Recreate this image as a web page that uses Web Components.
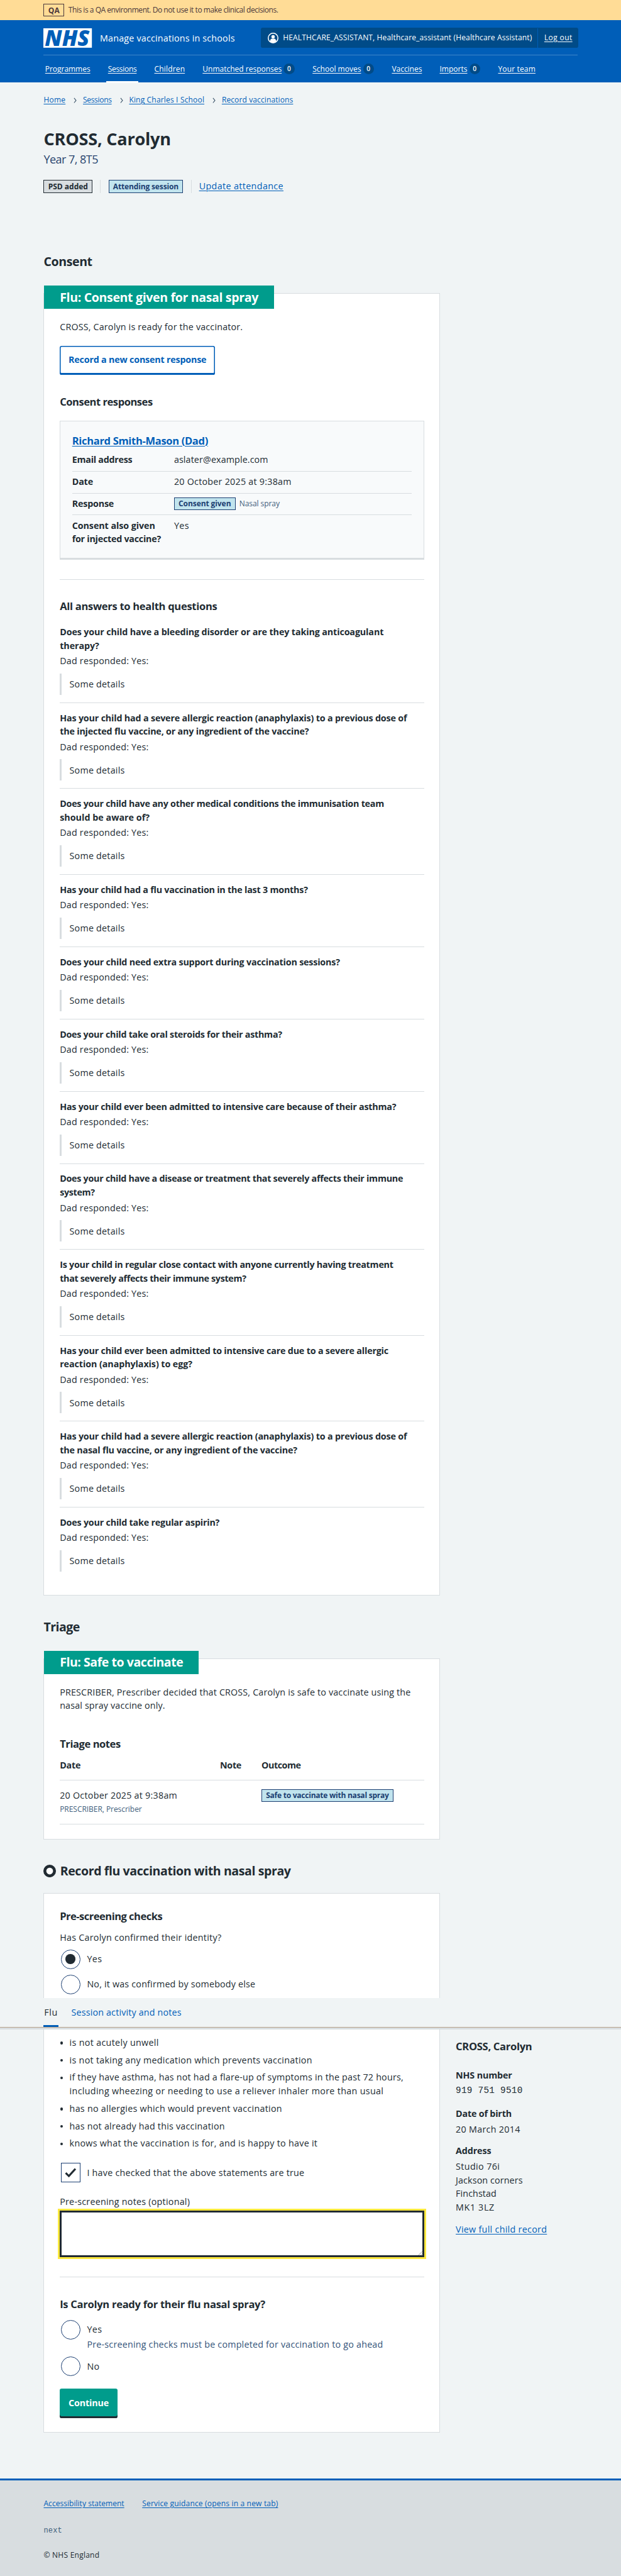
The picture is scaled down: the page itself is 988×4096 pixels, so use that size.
<!DOCTYPE html>
<html lang="en">
<head>
<meta charset="utf-8">
<title>CROSS, Carolyn</title>
<style>
html{background:#d8dde0}
body{margin:0;background:#f0f4f5;color:#212b32;font-family:"Open Sans","Noto Sans",sans-serif}
</style>
</head>
<body>
<qa-banner></qa-banner>
<nhs-header></nhs-header>
<patient-page></patient-page>
<nhs-footer></nhs-footer>
<script>
/* Lengths are written for a 1280px layout and rendered at this density */
const DENSITY=.77222;
const dense=css=>css.replace(/(\d*\.?\d+)px/g,(m,n)=>+(n*DENSITY).toFixed(4)+"px");

const define=(name,css,html)=>customElements.define(name,class extends HTMLElement{
  connectedCallback(){
    if(this.shadowRoot)return;
    const root=this.attachShadow({mode:"open"});
    root.innerHTML=dense(`<style>*{box-sizing:border-box}:host{display:block;box-sizing:border-box}${css}</style>${typeof html==="function"?html(this):html}`);
  }
});

/* One line of text set to a given measure: w = width, s = size, l = line height, b = weight */
const fitted=[];
customElements.define("fit-text",class extends HTMLElement{
  connectedCallback(){
    if(this.shadowRoot)return;
    const g=(n,d)=>this.getAttribute(n)||d;
    const root=this.attachShadow({mode:"open"});
    root.innerHTML=dense(`<style>:host{display:block;box-sizing:border-box;padding-top:${(g("s",19)*.037).toFixed(2)}px;font-size:${(g("s",19)*.975).toFixed(3)}px;line-height:${g("l",28)}px;height:${g("l",28)}px;font-weight:${g("b",440)};${this.hasAttribute("c")?`color:${g("c")};`:""}${this.hasAttribute("mono")?'font-family:"Liberation Mono",monospace;':""}white-space:pre}
    span{display:inline-block;${this.hasAttribute("u")?"text-decoration:underline;text-decoration-thickness:1px;text-underline-offset:3px;":""}}</style><span><slot></slot></span>`);
    fitted.push(this);
  }
});

define("qa-banner",`:host{height:42px;background:#ffdc96;color:#4b383c;padding:8px 90px}
.r{display:flex;gap:9px}.tag{border:1px solid #4b383c;width:42px;height:26px;padding-left:8px}.m{margin-top:1px}`,
`<div class="r"><div class="tag"><fit-text w="24" s="16" l="24" b="660">QA</fit-text></div><fit-text class="m" w="432" s="16" l="24">This is a QA environment. Do not use it to make clinical decisions.</fit-text></div>`);

define("nav-item",`:host{display:flex;gap:4px;padding:0 3px;height:57px;align-items:flex-start;padding-top:16px}
:host([current]){border-bottom:4px solid #fff}
i{font-style:normal;background:#004b88;border-radius:12px;width:23px;height:22px;margin-top:1px;display:flex;justify-content:center}`,
el=>`<fit-text w="${el.getAttribute("w")}" s="16" l="24" u><slot></slot></fit-text>${el.hasAttribute("count")?`<i><fit-text w="8" s="13.5" l="21" b="600">${el.getAttribute("count")}</fit-text></i>`:""}`);

define("nhs-header",`:host{background:#005eb8;height:128px;padding:15px 88.400px 0 90px;color:#fff}
.top{display:flex;align-items:center;height:42px}
.logo{width:100px;height:40px;overflow:visible}.name{margin-left:16px}
.acc{margin-left:auto;width:654px;height:42px;border-radius:4px;background:#004b88;display:flex;align-items:center;padding-left:14px}
.acc svg{width:22px;height:22px;margin-right:10px}
.out{margin-left:11px;border-left:1px solid #005eb8;height:40px;padding:7px 0 0 13px}
.acc>fit-text{margin-bottom:1px}
hr{border:0;height:1px;background:#3f86c9;margin:14px 1px 0 0}
nav{display:flex;gap:30.500px;justify-content:flex-start}`,
`<div class="top"><svg class="logo" viewBox="0 0 100 40"><rect width="100" height="40" fill="#fff"/><text x="3" y="36" font-family="Open Sans" font-weight="800" font-style="italic" font-size="46" textLength="92" lengthAdjust="spacingAndGlyphs" fill="#005eb8">NHS</text></svg>
<fit-text class="name" w="278" s="19" l="28">Manage vaccinations in schools</fit-text>
<div class="acc"><svg viewBox="0 0 22 22"><circle cx="11" cy="11" r="10" fill="none" stroke="#fff" stroke-width="2"/><circle cx="11" cy="8.3" r="3.5" fill="#fff"/><path d="M4.5 18.5c0-4 2-6.3 4.3-6.3h4.4c2.300 0 4.300 2.300 4.300 6.300C15.600 20.300 13.500 21 11 21s-4.600-.700-6.500-2.500z" fill="#fff"/></svg>
<fit-text w="513" s="16" l="24">HEALTHCARE_ASSISTANT, Healthcare_assistant (Healthcare Assistant)</fit-text><div class="out"><fit-text w="58" s="16" l="24" u>Log out</fit-text></div></div></div>
<hr><nav><nav-item w="93">Programmes</nav-item><nav-item w="59" current>Sessions</nav-item><nav-item w="63">Children</nav-item><nav-item w="163" count="0">Unmatched responses</nav-item><nav-item w="100" count="0">School moves</nav-item><nav-item w="62">Vaccines</nav-item><nav-item w="57" count="0">Imports</nav-item><nav-item w="77">Your team</nav-item></nav>`);

define("crumb-trail",`:host{display:flex;height:24px}svg{width:36px;height:24px}`,
el=>[["Home",45],["Sessions",59],["King Charles I School",155],["Record vaccinations",147]].map(([t,w])=>`<fit-text w="${w}" s="16" l="24" c="#005eb8" u>${t}</fit-text>`).join(`<svg viewBox="0 0 36 24"><path d="M18 7.500l4 5-4 5" fill="none" stroke="#41596d" stroke-width="1.500"/></svg>`));

define("status-tag",`:host{display:inline-flex;height:26px;border:1px solid #1c3f72;background:#c1e4ee;color:#1c3f72;padding:0 8px;justify-content:center}
:host([grey]){background:#d8dde0;color:#212b32;border-color:#212b32}`,
el=>`<fit-text w="${el.getAttribute("w")}" s="16" l="24" b="660"><slot></slot></fit-text>`);

define("content-card",`:host{background:#fff;border:1px solid #d8dde0;width:817px;padding:0 32px}
.h{display:flex;width:max-content;background:#009c8c;color:#fff;margin:-17px 0 0 -33px;padding:6px 32px 0 33px;height:48px}`,
el=>(el.hasAttribute("heading")?`<div class="h"><fit-text w="${el.getAttribute("hw")}" s="26" l="34" b="660">${el.getAttribute("heading")}</fit-text></div>`:"")+`<slot></slot>`);

define("summary-row",`:host{display:grid;grid-template-columns:210px 1fr;padding:6px 0 9.800px;border-bottom:1px solid #d8dde0}:host([last]){border:0}`,
`<slot name="k"></slot><slot name="v"></slot>`);

define("health-question",`:host{padding-bottom:15.640px;border-bottom:1px solid #d8dde0;margin-bottom:16px}:host([last]){border:0}
.a{margin-top:4px}.q{margin-top:12px;border-left:4px solid #d8dde0;height:44px;padding:8px 0 0 16px}`,
`<slot></slot><fit-text class="a" w="183">Dad responded: Yes:</fit-text><div class="q"><fit-text w="114">Some details</fit-text></div>`);

define("choice-input",`:host{display:flex;gap:14px;height:40px;padding-left:2px}
i{width:40px;height:40px;flex:none;border:2px solid #1c3f72;border-radius:50%;background:#fff;display:flex;align-items:center;justify-content:center}
:host([square]) i{border-radius:0}b{width:20px;height:20px;border-radius:50%;background:#212b32}slot{display:block;}.l{margin-top:5px}svg{width:24px;height:20px}`,
el=>`<i>${el.hasAttribute("square")?'<svg viewBox="0 0 24 20"><path d="M2 10.500l6.500 6.500L22 2" fill="none" stroke="#212b32" stroke-width="4"/></svg>':el.hasAttribute("checked")?"<b></b>":""}</i><div class="l"><slot></slot></div>`);

define("push-button",`:host{display:flex;width:max-content;height:60px;border-radius:4px;padding:14px 18px 0;background:#009c8c;color:#fff;box-shadow:inset 0 -4px #212b32}
:host([outline]){background:#fff;color:#005eb8;box-shadow:inset 0 0 0 2px #005eb8,inset 0 -4px #005eb8}`,
el=>`<fit-text w="${el.getAttribute("w")}" b="660"><slot></slot></fit-text>`);

define("bullet-item",`:host{display:flex;margin-bottom:8px}i{width:5.500px;height:5.500px;border-radius:50%;background:#212b32;margin:13px 13.500px 0 1px;flex:none}`,`<i></i><div><slot></slot></div>`);

define("sticky-tabs",`:host{position:absolute;left:0;right:0;top:4114px;height:65px;background:#f0f4f5;border-bottom:4px solid #d8dde0;padding-left:90px}
.r{display:flex;gap:26px;height:60px}.t{border-bottom:4px solid #005eb8;padding:14.500px 2px 0 1px}.s{padding-top:14.500px}hr{border:0;height:1px;background:#b9a38c;margin:0 0 0 -90px}`,
`<div class="r"><div class="t"><fit-text w="28">Flu</fit-text></div><div class="s"><fit-text w="227" c="#005eb8">Session activity and notes</fit-text></div></div><hr>`);

define("child-summary",`:host{padding-top:4028px}`,
`<fit-text w="157" s="22" l="30" b="660">CROSS, Carolyn</fit-text>
<fit-text w="116" b="660" style="margin-top:31px">NHS number</fit-text><fit-text mono w="138" style="margin-top:4px">919 751 9510</fit-text>
<fit-text w="115" b="660" style="margin-top:18.500px">Date of birth</fit-text><fit-text w="133" style="margin-top:4px">20 March 2014</fit-text>
<fit-text w="73" b="660" style="margin-top:17px">Address</fit-text><fit-text w="91" style="margin-top:4px">Studio 76i</fit-text><fit-text w="138">Jackson corners</fit-text><fit-text w="84">Finchstad</fit-text><fit-text w="80">MK1 3LZ</fit-text>
<fit-text w="188" c="#005eb8" u style="margin-top:17.500px">View full child record</fit-text>`);

const QS=[[["Does your child have a bleeding disorder or are they taking anticoagulant",667],["therapy?",81]],
[["Has your child had a severe allergic reaction (anaphylaxis) to a previous dose of",715],["the injected flu vaccine, or any ingredient of the vaccine?",513]],
[["Does your child have any other medical conditions the immunisation team",668],["should be aware of?",185]],
[["Has your child had a flu vaccination in the last 3 months?",511]],
[["Does your child need extra support during vaccination sessions?",577]],
[["Does your child take oral steroids for their asthma?",458]],
[["Has your child ever been admitted to intensive care because of their asthma?",693]],
[["Does your child have a disease or treatment that severely affects their immune",707],["system?",72]],
[["Is your child in regular close contact with anyone currently having treatment",687],["that severely affects their immune system?",384]],
[["Has your child ever been admitted to intensive care due to a severe allergic",677],["reaction (anaphylaxis) to egg?",273]],
[["Has your child had a severe allergic reaction (anaphylaxis) to a previous dose of",715],["the nasal flu vaccine, or any ingredient of the vaccine?",489]],
[["Does your child take regular aspirin?",329]]];

define("patient-page",`.wrap{display:grid;grid-template-columns:817px 1fr;column-gap:32px;padding:0 88.400px 0 90px;height:4934px}
main{padding-top:24px}.acts{display:flex;margin-top:24.500px}.acts i{width:1px;background:#d8dde0;margin:0 16px}
hr{border:0;height:1px;background:#d8dde0;margin:0}
.inner{margin-top:25.500px;border:1px solid #d8dde0;border-bottom-width:4px;background:#f8fafb;height:286px;padding:23.500px 24px 0}
.cols{display:grid;grid-template-columns:330px 85.500px 1fr}.two{display:flex;align-items:flex-start}
.rec{display:flex;align-items:center;gap:8px;margin-top:47px}.rec svg{width:26px;height:26px}
.ta{height:96px;border:4px solid #212b32;outline:4px solid #ffe93f;margin-top:5px;display:flex;align-items:flex-end;justify-content:flex-end}.ta svg{width:9px;height:9px}`,
`<div class="wrap"><main><crumb-trail></crumb-trail>
<fit-text w="262" s="36" l="44" b="660" style="margin-top:44.500px">CROSS, Carolyn</fit-text>
<fit-text w="112" s="24" l="36" c="#2a456f" style="margin-top:4px">Year 7, 8T5</fit-text>
<div class="acts"><status-tag grey w="82">PSD added</status-tag><i></i><status-tag w="135">Attending session</status-tag><i></i><fit-text w="174" c="#005eb8" u style="margin-top:-2px">Update attendance</fit-text></div>
<fit-text w="100" s="26" l="34" b="660" style="margin-top:124px">Consent</fit-text>
<content-card heading="Flu: Consent given for nasal spray" hw="409" style="margin-top:49px;height:2682px">
 <fit-text w="377" style="margin-top:22.500px">CROSS, Carolyn is ready for the vaccinator.</fit-text>
 <push-button outline w="284" style="margin-top:25.500px">Record a new consent response</push-button>
 <fit-text w="191" s="22" l="30" b="660" style="margin-top:38.500px">Consent responses</fit-text>
 <div class="inner"><fit-text w="280" s="22" l="30" b="660" c="#005eb8" u>Richard Smith-Mason (Dad)</fit-text>
  <summary-row style="margin-top:5px"><fit-text slot="k" w="124" b="660">Email address</fit-text><fit-text slot="v" w="194">aslater@example.com</fit-text></summary-row>
  <summary-row><fit-text slot="k" w="43" b="660">Date</fit-text><fit-text slot="v" w="242">20 October 2025 at 9:38am</fit-text></summary-row>
  <summary-row><fit-text slot="k" w="86" b="660">Response</fit-text><div slot="v" class="two" style="height:28px"><status-tag w="108" style="margin-top:2px">Consent given</status-tag><fit-text w="83" s="16" l="24" c="#41607c" style="margin:3px 0 0 8px">Nasal spray</fit-text></div></summary-row>
  <summary-row last><div slot="k"><fit-text w="171" b="660">Consent also given</fit-text><fit-text w="183" b="660">for injected vaccine?</fit-text></div><fit-text slot="v" w="31">Yes</fit-text></summary-row>
 </div>
 <hr style="margin-top:40px">
 <fit-text w="324" s="22" l="30" b="660" style="margin:39.500px 0 24px">All answers to health questions</fit-text>
 ${QS.map((q,i)=>`<health-question${i==11?" last":""}>${q.map(([t,w])=>`<fit-text b="660" w="${w}">${t}</fit-text>`).join("")}</health-question>`).join("")}
</content-card>
<fit-text w="74" s="26" l="34" b="660" style="margin-top:46px">Triage</fit-text>
<content-card heading="Flu: Safe to vaccinate" hw="254" style="margin-top:48.500px;height:374px">
 <fit-text w="723" style="margin-top:23px">PRESCRIBER, Prescriber decided that CROSS, Carolyn is safe to vaccinate using the</fit-text><fit-text w="217">nasal spray vaccine only.</fit-text>
 <fit-text w="125" s="22" l="30" b="660" style="margin-top:49px">Triage notes</fit-text>
 <div class="cols" style="margin-top:15.500px;padding-bottom:16.500px;border-bottom:2px solid #d8dde0"><fit-text w="43" b="660">Date</fit-text><fit-text w="44" b="660">Note</fit-text><fit-text w="81" b="660">Outcome</fit-text></div>
 <div class="cols" style="padding:16.500px 0 17.500px;border-bottom:1px solid #d8dde0"><div><fit-text w="242">20 October 2025 at 9:38am</fit-text><fit-text w="169" s="16" l="24" c="#41607c" style="margin-top:3px">PRESCRIBER, Prescriber</fit-text></div><span></span><div class="two"><status-tag w="253" style="margin-top:1.500px">Safe to vaccinate with nasal spray</status-tag></div></div>
</content-card>
<div class="rec"><svg viewBox="0 0 26 26"><circle cx="13" cy="13" r="10" fill="#fff" stroke="#212b32" stroke-width="6"/></svg><fit-text w="475" s="26" l="34" b="660">Record flu vaccination with nasal spray</fit-text></div>
<content-card style="margin-top:28px;height:1111px;padding-top:31px">
 <fit-text w="211" s="22" l="30" b="660">Pre-screening checks</fit-text>
 <fit-text w="333" style="margin:15px 0 11.500px">Has Carolyn confirmed their identity?</fit-text>
 <choice-input checked><fit-text w="31">Yes</fit-text></choice-input>
 <choice-input style="margin-top:12px"><fit-text w="347">No, it was confirmed by somebody else</fit-text></choice-input>
 <div style="margin-top:85px;padding-bottom:.1px">
  <bullet-item><fit-text w="184">is not acutely unwell</fit-text></bullet-item>
  <bullet-item><fit-text w="500">is not taking any medication which prevents vaccination</fit-text></bullet-item>
  <bullet-item><fit-text w="688">if they have asthma, has not had a flare-up of symptoms in the past 72 hours,</fit-text><fit-text w="647">including wheezing or needing to use a reliever inhaler more than usual</fit-text></bullet-item>
  <bullet-item><fit-text w="438">has no allergies which would prevent vaccination</fit-text></bullet-item>
  <bullet-item><fit-text w="320">has not already had this vaccination</fit-text></bullet-item>
  <bullet-item><fit-text w="511">knows what the vaccination is for, and is happy to have it</fit-text></bullet-item></div>
 <choice-input square style="margin-top:19px"><fit-text w="448">I have checked that the above statements are true</fit-text></choice-input>
 <fit-text w="268" style="margin-top:25px">Pre-screening notes (optional)</fit-text>
 <div class="ta"><svg viewBox="0 0 9 9"><path d="M1 9L9 1M5.500 9L9 5.500" stroke="#777" fill="none"/></svg></div>
 <hr style="margin-top:40px">
 <fit-text w="423" s="22" l="30" b="660" style="margin:39.500px 0 18.500px">Is Carolyn ready for their flu nasal spray?</fit-text>
 <choice-input><fit-text w="31">Yes</fit-text></choice-input>
 <fit-text w="610" c="#34547a" style="margin:-3.500px 0 11.500px 56px">Pre-screening checks must be completed for vaccination to go ahead</fit-text>
 <choice-input><fit-text w="26">No</fit-text></choice-input>
 <push-button w="83" style="margin-top:26px">Continue</push-button>
</content-card></main><child-summary></child-summary></div><sticky-tabs></sticky-tabs>`);

define("nhs-footer",`:host{border-top:4px solid #005eb8;background:#d8dde0;height:198px;padding:35px 90px 0}.r{display:flex;gap:37px}`,
`<div class="r"><fit-text w="166" s="16" l="24" c="#005eb8" u>Accessibility statement</fit-text><fit-text w="280" s="16" l="24" c="#005eb8" u>Service guidance (opens in a new tab)</fit-text></div><fit-text mono w="38" s="16" l="24" c="#41607c" style="margin-top:31.500px">next</fit-text><fit-text w="115" s="16" l="24" style="margin-top:26.500px">© NHS England</fit-text>`);

/* Spread the difference between each line's natural width and its measure over its letters */
const textOf=e=>{const s=e.querySelector("slot");return s?s.assignedNodes().map(n=>n.textContent).join(""):e.textContent};
for(let pass=0;pass<2;pass++)for(const e of fitted){
  const span=e.shadowRoot.querySelector("span"),n=textOf(e).length;
  const diff=(e.getAttribute("w")*DENSITY-span.getBoundingClientRect().width)/n;
  span.style.letterSpacing=((parseFloat(span.style.letterSpacing)||0)+diff)+"px";
}
</script>
</body>
</html>
